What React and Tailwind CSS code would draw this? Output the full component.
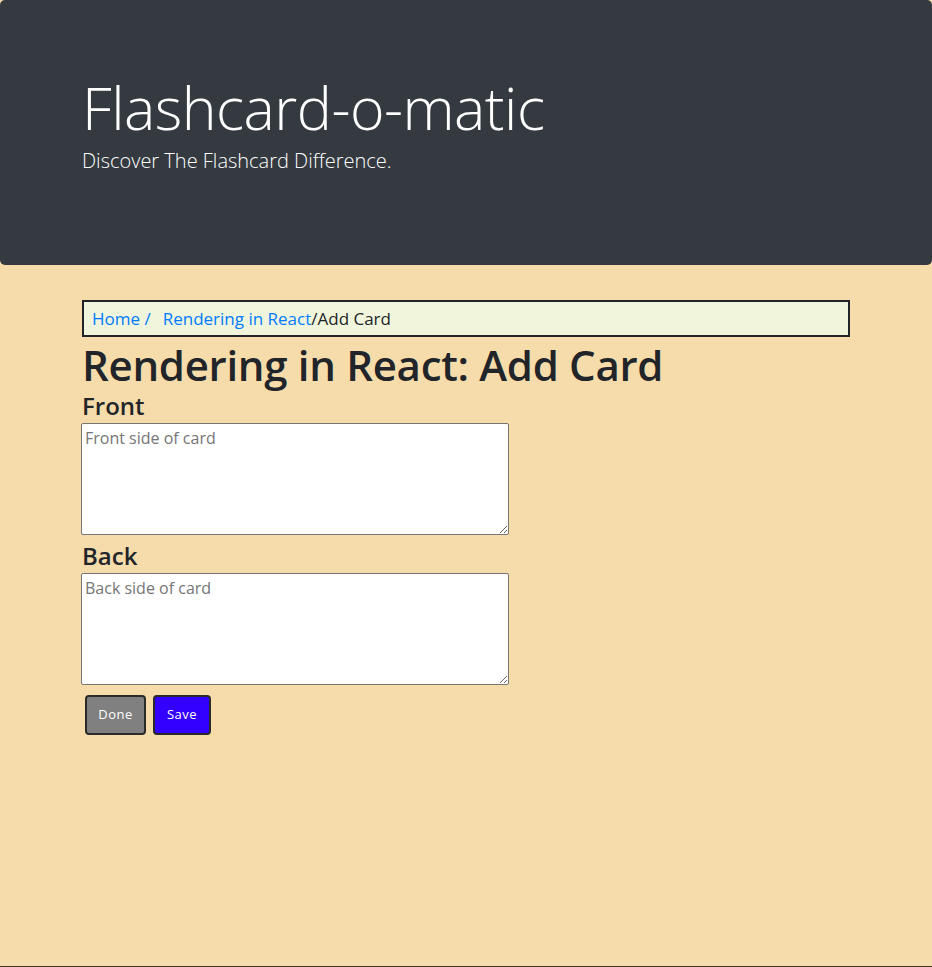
import { useState } from 'react';

function Header() {
  return (
    <div className="bg-[#343a40] rounded-[5px] h-[265px] px-[82px] pt-[72px] text-white">
      <h1 className="text-[59px] font-light leading-[1.2] tracking-[-0.5px]">Flashcard-o-matic</h1>
      <p className="text-[20px] font-light leading-[1.2] mt-[6px]">Discover The Flashcard Difference.</p>
    </div>
  );
}

function Breadcrumb() {
  return (
    <nav className="border-2 border-[#212529] bg-[#f0f5dc] h-[37px] flex items-center px-[8px] text-[17px]">
      <a href="#" className="text-[#007bff]">Home /</a>
      <a href="#" className="text-[#007bff] ml-[12px]">Rendering in React</a>
      <span className="text-[#212529]">/Add Card</span>
    </nav>
  );
}

function Field({ label, placeholder, value, onChange, className }) {
  return (
    <div className={`flex flex-col ${className}`}>
      <label className="text-[24px] font-semibold leading-[1.2] mb-[2px] text-[#212529]">{label}</label>
      <textarea
        className="-ml-[1px] w-[428px] h-[112px] border border-[#767676] rounded-[2px] bg-white px-[3px] py-[2px] text-[16px] text-[#212529] placeholder:text-[#757575] outline-none"
        placeholder={placeholder}
        value={value}
        onChange={(e) => onChange(e.target.value)}
      />
    </div>
  );
}

function App() {
  const [front, setFront] = useState('');
  const [back, setBack] = useState('');

  return (
    <div
      className="min-h-[967px] bg-[#f7dcab] border-b border-[#3b3a2c]"
      style={{ fontFamily: '"Open Sans", "Noto Sans", sans-serif' }}
    >
      <Header />
      <div className="px-[82px] pt-[35px]">
        <Breadcrumb />
        <h2 className="text-[42px] font-semibold leading-[1.2] text-[#212529] mt-[3px] tracking-[-0.3px]">
          Rendering in React: Add Card
        </h2>
        <form className="flex flex-col mt-[2px]" onSubmit={(e) => e.preventDefault()}>
          <Field label="Front" placeholder="Front side of card" value={front} onChange={setFront} />
          <Field className="mt-[7px]" label="Back" placeholder="Back side of card" value={back} onChange={setBack} />
          <div className="flex gap-[7px] ml-[3px] mt-[10px]">
            <button type="button" className="w-[61px] h-[40px] bg-[#808080] border-2 border-[#2a2a2a] rounded-[4px] text-white text-[13px] tracking-[0.5px]">
              Done
            </button>
            <button type="submit" className="w-[58px] h-[40px] bg-[#3300ff] border-2 border-[#2a2a2a] rounded-[4px] text-white text-[13px] tracking-[0.5px]">
              Save
            </button>
          </div>
        </form>
      </div>
    </div>
  );
}

export default App;
